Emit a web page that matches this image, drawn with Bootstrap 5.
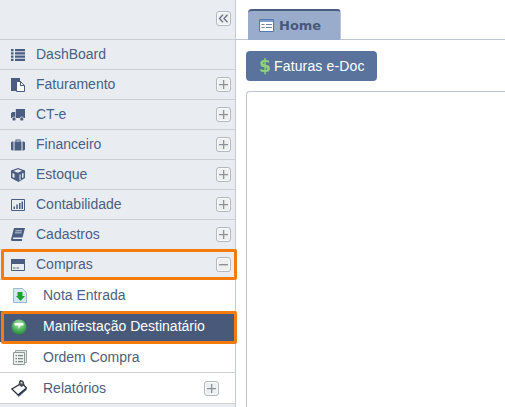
<!DOCTYPE html>
<html lang="pt-BR">
<head>
  <meta charset="UTF-8">
  <title>Home</title>
  <link href="https://cdn.jsdelivr.net/npm/bootstrap@5.3.2/dist/css/bootstrap.min.css" rel="stylesheet">
  <style>
    html, body { height: 100%; }
    body {
      overflow: hidden;
      background: #fff;
      font-family: "Liberation Sans", Arial, sans-serif;
      font-size: 14px;
    }
    .app-shell { height: 407px; }
    .side-menu {
      width: 236px;
      flex: none;
      background: #e9edf1;
      border-right: 1px solid #c4cbd3;
    }
    .side-top {
      height: 40px;
      padding: 11px 4px 0 0;
      border-bottom: 1px solid #c9ced4;
    }
    .menu-row {
      height: 30px;
      padding: 0 4px 0 11px;
      color: #4a5f85;
      border-bottom: 1px solid #cdd1d6;
    }
    .menu-row .menu-ico { width: 25px; flex: none; }
    .menu-ico svg { display: block; }
    .menu-label { flex: 1; }
    .sub-row {
      height: 31px;
      padding: 0 16px 0 11px;
      background: #fff;
      color: #4c5f80;
    }
    .sub-row .menu-ico { width: 32px; flex: none; }
    .ico-shift svg { margin-left: 2px; }
    .row-line { border-bottom: 1px solid #cdd1d6; }
    .sub-active {
      background: #48597a;
      color: #fff;
    }
    .mark-orange { position: relative; }
    .mark-orange::after {
      content: "";
      position: absolute;
      left: 1px;
      right: -2px;
      top: -1px;
      bottom: -1px;
      border: 3px solid #f57c0c;
      border-radius: 2px;
      pointer-events: none;
    }
    .sub-active.mark-orange::after { top: 0; bottom: -2px; }
    .sq-btn {
      width: 15px;
      height: 15px;
      flex: none;
      border: 1px solid #b3b8bf;
      border-radius: 3px;
      background: #eeeff0;
      box-shadow: inset 0 0 0 1px #fafafa;
    }
    .content-pane { min-width: 0; }
    .tab-bar {
      height: 40px;
      padding: 9px 0 0 12px;
      border-bottom: 1px solid #bcc5d0;
    }
    .tab-home {
      width: 93px;
      height: 31px;
      padding-left: 11px;
      background: #9aaccc;
      border-top: 2px solid #4a5d80;
      border-right: 1px solid #bcc7d8;
      border-radius: 4px 4px 0 0;
      color: #49597a;
      font-family: "DejaVu Sans", Verdana, sans-serif;
      font-size: 13px;
      font-weight: 700;
    }
    .tab-title { margin-left: 1px; }
    .btn-faturas {
      height: 30px;
      width: 131px;
      margin: 11px 0 0 10px;
      padding: 0 0 0 13px;
      background: #5a739d;
      border: 0;
      border-radius: 4px;
      color: #fff;
      font-size: 14px;
      letter-spacing: .15px;
    }
    .btn-faturas:hover { background: #5a739d; color: #fff; }
    .dollar-sign {
      width: 11px;
      color: #8fd07f;
      font-family: "DejaVu Sans", sans-serif;
      font-size: 17px;
      font-weight: 700;
      line-height: 1;
    }
    .frame-box {
      flex: 1;
      margin: 10px 0 0 10px;
      background: #fff;
      border: 1px solid #bcc5d0;
      border-right: 0;
      border-bottom: 0;
      border-radius: 4px 0 0 0;
    }
  </style>
</head>
<body>
  <div class="app-shell d-flex">
    <aside class="side-menu d-flex flex-column">
      <div class="side-top d-flex justify-content-end">
        <span class="sq-btn d-flex align-items-center justify-content-center">
          <svg width="11" height="9" viewBox="0 0 11 9" fill="none" stroke="#6b7480" stroke-width="1.300"><path d="M5 .8 1.500 4.500 5 8.200M9.500 .8 6 4.500l3.500 3.700"/></svg>
        </span>
      </div>

      <div class="menu-row d-flex align-items-center">
        <span class="menu-ico"><svg width="14" height="12" viewBox="0 0 14 12" fill="#4a5d80"><path d="M0 0h2.500v2.200H0zM4 0h10v2.200H4zM0 3.300h2.500v2.200H0zM4 3.300h10v2.200H4zM0 6.600h2.500v2.200H0zM4 6.600h10v2.200H4zM0 9.800h2.500V12H0zM4 9.800h10V12H4z"/></svg></span>
        <span class="menu-label">DashBoard</span>
      </div>
      <div class="menu-row d-flex align-items-center">
        <span class="menu-ico"><svg width="14" height="14" viewBox="0 0 14 14"><path fill="#4a5d80" d="M0 0h9v3H6v10H0z"/><path fill="#fff" stroke="#4a5d80" d="M5.500 3.500h4l4 4v6h-8z"/><path fill="#4a5d80" d="M9 3.500h1v3.500h3.500v1H9z"/></svg></span>
        <span class="menu-label">Faturamento</span>
        <span class="sq-btn d-flex align-items-center justify-content-center"><svg width="9" height="9" viewBox="0 0 9 9" fill="#8d9298"><path d="M4 0h1.300v4H9v1.300H5.300V9H4V5.300H0V4h4z"/></svg></span>
      </div>
      <div class="menu-row d-flex align-items-center">
        <span class="menu-ico"><svg width="14" height="12" viewBox="0 0 14 12" fill="#4a5d80"><path d="M4.800 0h9.200v9H4.800zM1.200 3h3v6H0V4.500z"/><circle cx="3" cy="10" r="2" stroke="#e9edf1" stroke-width=".7"/><circle cx="10.800" cy="10" r="2" stroke="#e9edf1" stroke-width=".7"/></svg></span>
        <span class="menu-label">CT-e</span>
        <span class="sq-btn d-flex align-items-center justify-content-center"><svg width="9" height="9" viewBox="0 0 9 9" fill="#8d9298"><path d="M4 0h1.300v4H9v1.300H5.300V9H4V5.300H0V4h4z"/></svg></span>
      </div>
      <div class="menu-row d-flex align-items-center">
        <span class="menu-ico"><svg width="14" height="12" viewBox="0 0 14 12" fill="#4a5d80"><path d="M0 3.500 1 2.500h1.500V11.500H1L0 10.500zM3.500 2.500h7v9h-7zM11.500 2.500H13l1 1v7l-1 1h-1.500z"/><path d="M4.500 2.500V.5h5v2h-1V1.500h-3v1z"/></svg></span>
        <span class="menu-label">Financeiro</span>
        <span class="sq-btn d-flex align-items-center justify-content-center"><svg width="9" height="9" viewBox="0 0 9 9" fill="#8d9298"><path d="M4 0h1.300v4H9v1.300H5.300V9H4V5.300H0V4h4z"/></svg></span>
      </div>
      <div class="menu-row d-flex align-items-center">
        <span class="menu-ico"><svg width="14" height="14" viewBox="0 0 14 14" fill="#4a5d80"><path d="M7 0 14 2.500V10l-6.500 4L0 10V2.500z"/><path fill="#e9edf1" d="M2.500 3 7 1.300 11 2.800 6.800 4.700zM1.500 5l2 1v4l-2-1zM8.500 6.500l1-.5v6l-1 .5zM11 5.500l1.500-.7v4.500L11 10z"/></svg></span>
        <span class="menu-label">Estoque</span>
        <span class="sq-btn d-flex align-items-center justify-content-center"><svg width="9" height="9" viewBox="0 0 9 9" fill="#8d9298"><path d="M4 0h1.300v4H9v1.300H5.300V9H4V5.300H0V4h4z"/></svg></span>
      </div>
      <div class="menu-row d-flex align-items-center">
        <span class="menu-ico"><svg width="14" height="12" viewBox="0 0 14 12"><path fill="none" stroke="#4a5d80" d="M.5.500h13v11H.5z"/><path fill="#4a5d80" d="M2.500 7.500h1.500V10H2.500zM5.300 5.500h1.500V10H5.300zM8 4h1.500v6H8zM10.500 2.500H12V10h-1.500z"/></svg></span>
        <span class="menu-label">Contabilidade</span>
        <span class="sq-btn d-flex align-items-center justify-content-center"><svg width="9" height="9" viewBox="0 0 9 9" fill="#8d9298"><path d="M4 0h1.300v4H9v1.300H5.300V9H4V5.300H0V4h4z"/></svg></span>
      </div>
      <div class="menu-row d-flex align-items-center">
        <span class="menu-ico"><svg width="14" height="13" viewBox="0 0 14 13" fill="#4a5d80"><path d="M3 0h11l-2.500 9.500H2.300L1.800 11H11v2H1.500Q0 13 0 11.500z"/><path fill="#e9edf1" d="M4.500 2.500h6.500v.8H4.300zM4 4.500h6.500v.8H3.800z"/></svg></span>
        <span class="menu-label">Cadastros</span>
        <span class="sq-btn d-flex align-items-center justify-content-center"><svg width="9" height="9" viewBox="0 0 9 9" fill="#8d9298"><path d="M4 0h1.300v4H9v1.300H5.300V9H4V5.300H0V4h4z"/></svg></span>
      </div>
      <div class="menu-row mark-orange d-flex align-items-center">
        <span class="menu-ico"><svg width="14" height="12" viewBox="0 0 14 12"><path fill="none" stroke="#4a5d80" d="M.5.500h13v11H.5z"/><path fill="#4a5d80" d="M0 0h14v5H0zM2 8.500h2.500v1H2zM5.500 8.500H8v1H5.500z"/></svg></span>
        <span class="menu-label">Compras</span>
        <span class="sq-btn d-flex align-items-center justify-content-center"><svg width="9" height="2" viewBox="0 0 9 2" fill="#8d9298"><path d="M0 0h9v1.400H0z"/></svg></span>
      </div>

      <div class="sub-row d-flex align-items-center">
        <span class="menu-ico ico-shift"><svg width="14" height="15" viewBox="0 0 14 15"><path fill="#d6e6f6" stroke="#9ab8d8" d="M.5.500h9l4 4v10H.5z"/><path fill="#1ba32f" d="M4.500 4h5v4H12l-4.500 5L3 8h1.500z"/></svg></span>
        <span class="menu-label">Nota Entrada</span>
      </div>
      <div class="sub-row sub-active mark-orange d-flex align-items-center">
        <span class="menu-ico"><svg width="16" height="16" viewBox="0 0 16 16"><defs><radialGradient id="ballGreen" cx=".5" cy=".3" r=".8"><stop offset="0" stop-color="#b6e8b8"/><stop offset=".6" stop-color="#43ab52"/><stop offset="1" stop-color="#1d7a33"/></radialGradient></defs><circle cx="8" cy="8" r="7.500" fill="url(#ballGreen)"/><path fill="#fff" d="M3.500 4h9v2.500H9.500L7.500 10V6.500h-4z"/></svg></span>
        <span class="menu-label">Manifestação Destinatário</span>
      </div>
      <div class="sub-row row-line d-flex align-items-center">
        <span class="menu-ico ico-shift"><svg width="14" height="15" viewBox="0 0 14 15"><path fill="#e4e8e6" stroke="#9aa5a2" d="M2.500 2.500V.5h11v12h-2"/><path fill="#eef1ef" stroke="#8d9a96" d="M.5 2.500h11v12H.5z"/><path fill="#7c8a86" d="M2.500 5h1.500v1.200H2.500zM5 5h5v1.200H5zM2.500 8h1.500v1.200H2.500zM5 8h5v1.200H5zM2.500 11h1.500v1.200H2.500zM5 11h5v1.200H5z"/></svg></span>
        <span class="menu-label">Ordem Compra</span>
      </div>
      <div class="sub-row row-line d-flex align-items-center">
        <span class="menu-ico"><svg width="16" height="18" viewBox="0 0 16 18"><path fill="#3f5278" d="M6.500 15.500 15.500 8v3L7.500 18z"/><path fill="#f8f9fb" stroke="#1f2733" stroke-width="1.200" d="M.8 10 11 4l4.500 5L7 16z"/><path fill="#4c535c" stroke="#3a4048" d="M8 5.500 9 1.500l3 .7 1 3.800-2.500 1.500z"/><path fill="#dfe3ea" d="M9.700 3h1.500l.3 1.500h-2z"/></svg></span>
        <span class="menu-label">Relatórios</span>
        <span class="sq-btn d-flex align-items-center justify-content-center"><svg width="9" height="9" viewBox="0 0 9 9" fill="#8d9298"><path d="M4 0h1.300v4H9v1.300H5.300V9H4V5.300H0V4h4z"/></svg></span>
      </div>
    </aside>

    <main class="content-pane flex-grow-1 d-flex flex-column">
      <div class="tab-bar d-flex">
        <div class="tab-home d-flex align-items-center gap-1">
          <svg width="15" height="13" viewBox="0 0 15 13"><path fill="#fff" stroke="#4f78b8" d="M.5.500h14v12H.5z"/><path fill="#7f9ccc" d="M1 1h13v2H1z"/><path fill="#6b86b0" d="M2.500 5h3v1h-3zM7 5h6v1H7zM2.500 8h3v1h-3zM7 8h6v1H7z"/></svg>
          <span class="tab-title">Home</span>
        </div>
      </div>
      <div>
        <button type="button" class="btn btn-faturas d-flex align-items-center gap-1">
          <span class="dollar-sign">$</span>Faturas e-Doc
        </button>
      </div>
      <div class="frame-box"></div>
    </main>
  </div>
  <script src="https://cdn.jsdelivr.net/npm/bootstrap@5.3.2/dist/js/bootstrap.bundle.min.js"></script>
</body>
</html>
